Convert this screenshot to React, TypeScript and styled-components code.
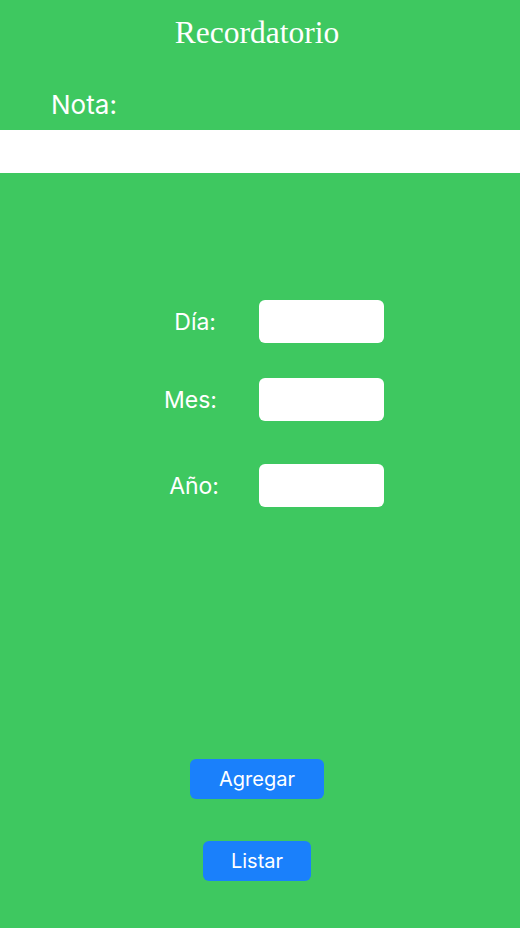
import React from "react";
import styled, { createGlobalStyle } from "styled-components";

const Global = createGlobalStyle`
  html, body { margin: 0; padding: 0; }
  body { background: #3ec860; }
`;

const Page = styled.div`
  width: 520px;
  height: 928px;
  background: #3ec860;
  display: flex;
  flex-direction: column;
  overflow: hidden;
  font-family: Inter, "Liberation Sans", sans-serif;
  color: #ffffff;
`;

const Title = styled.h1`
  margin: 0;
  padding-top: 12px;
  padding-right: 6px;
  font-family: "Liberation Serif", serif;
  font-weight: 400;
  font-size: 31.5px;
  line-height: 42px;
  text-align: center;
`;

const NoteLabel = styled.div`
  margin-top: 35px;
  padding-left: 51px;
  font-size: 26px;
  line-height: 32px;
`;

const NoteBar = styled.input`
  margin-top: 9px;
  height: 43px;
  width: 100%;
  box-sizing: border-box;
  border: none;
  background: #ffffff;
  outline: none;
  padding: 0 8px;
`;

const Form = styled.div`
  margin-top: 127px;
  display: flex;
  flex-direction: column;
`;

const Row = styled.div<{ $gap: number }>`
  display: grid;
  grid-template-columns: 1fr 1fr;
  align-items: center;
  margin-top: ${(p) => p.$gap}px;
`;

const Label = styled.label<{ $right: number }>`
  justify-self: end;
  padding-right: ${(p) => p.$right}px;
  font-size: 23px;
  line-height: 28px;
`;

const Field = styled.input`
  width: 125px;
  height: 43px;
  box-sizing: border-box;
  border: none;
  border-radius: 6px;
  background: #ffffff;
  margin-left: -1px;
  outline: none;
`;

const Actions = styled.div`
  margin-top: 252px;
  padding-right: 6px;
  display: flex;
  flex-direction: column;
  align-items: center;
  gap: 42px;
`;

const Button = styled.button<{ $w: number }>`
  width: ${(p) => p.$w}px;
  height: 40px;
  border: none;
  border-radius: 6px;
  background: #1a80fb;
  color: #ffffff;
  font-family: Inter, "Liberation Sans", sans-serif;
  font-size: 20px;
  padding: 0;
`;

export default function App() {
  return (
    <>
      <Global />
      <Page>
        <Title>Recordatorio</Title>
        <NoteLabel>Nota:</NoteLabel>
        <NoteBar />
        <Form>
          <Row $gap={0}>
            <Label $right={44}>Día:</Label>
            <Field />
          </Row>
          <Row $gap={35}>
            <Label $right={43}>Mes:</Label>
            <Field />
          </Row>
          <Row $gap={43}>
            <Label $right={41}>Año:</Label>
            <Field />
          </Row>
        </Form>
        <Actions>
          <Button $w={134}>Agregar</Button>
          <Button $w={108}>Listar</Button>
        </Actions>
      </Page>
    </>
  );
}
